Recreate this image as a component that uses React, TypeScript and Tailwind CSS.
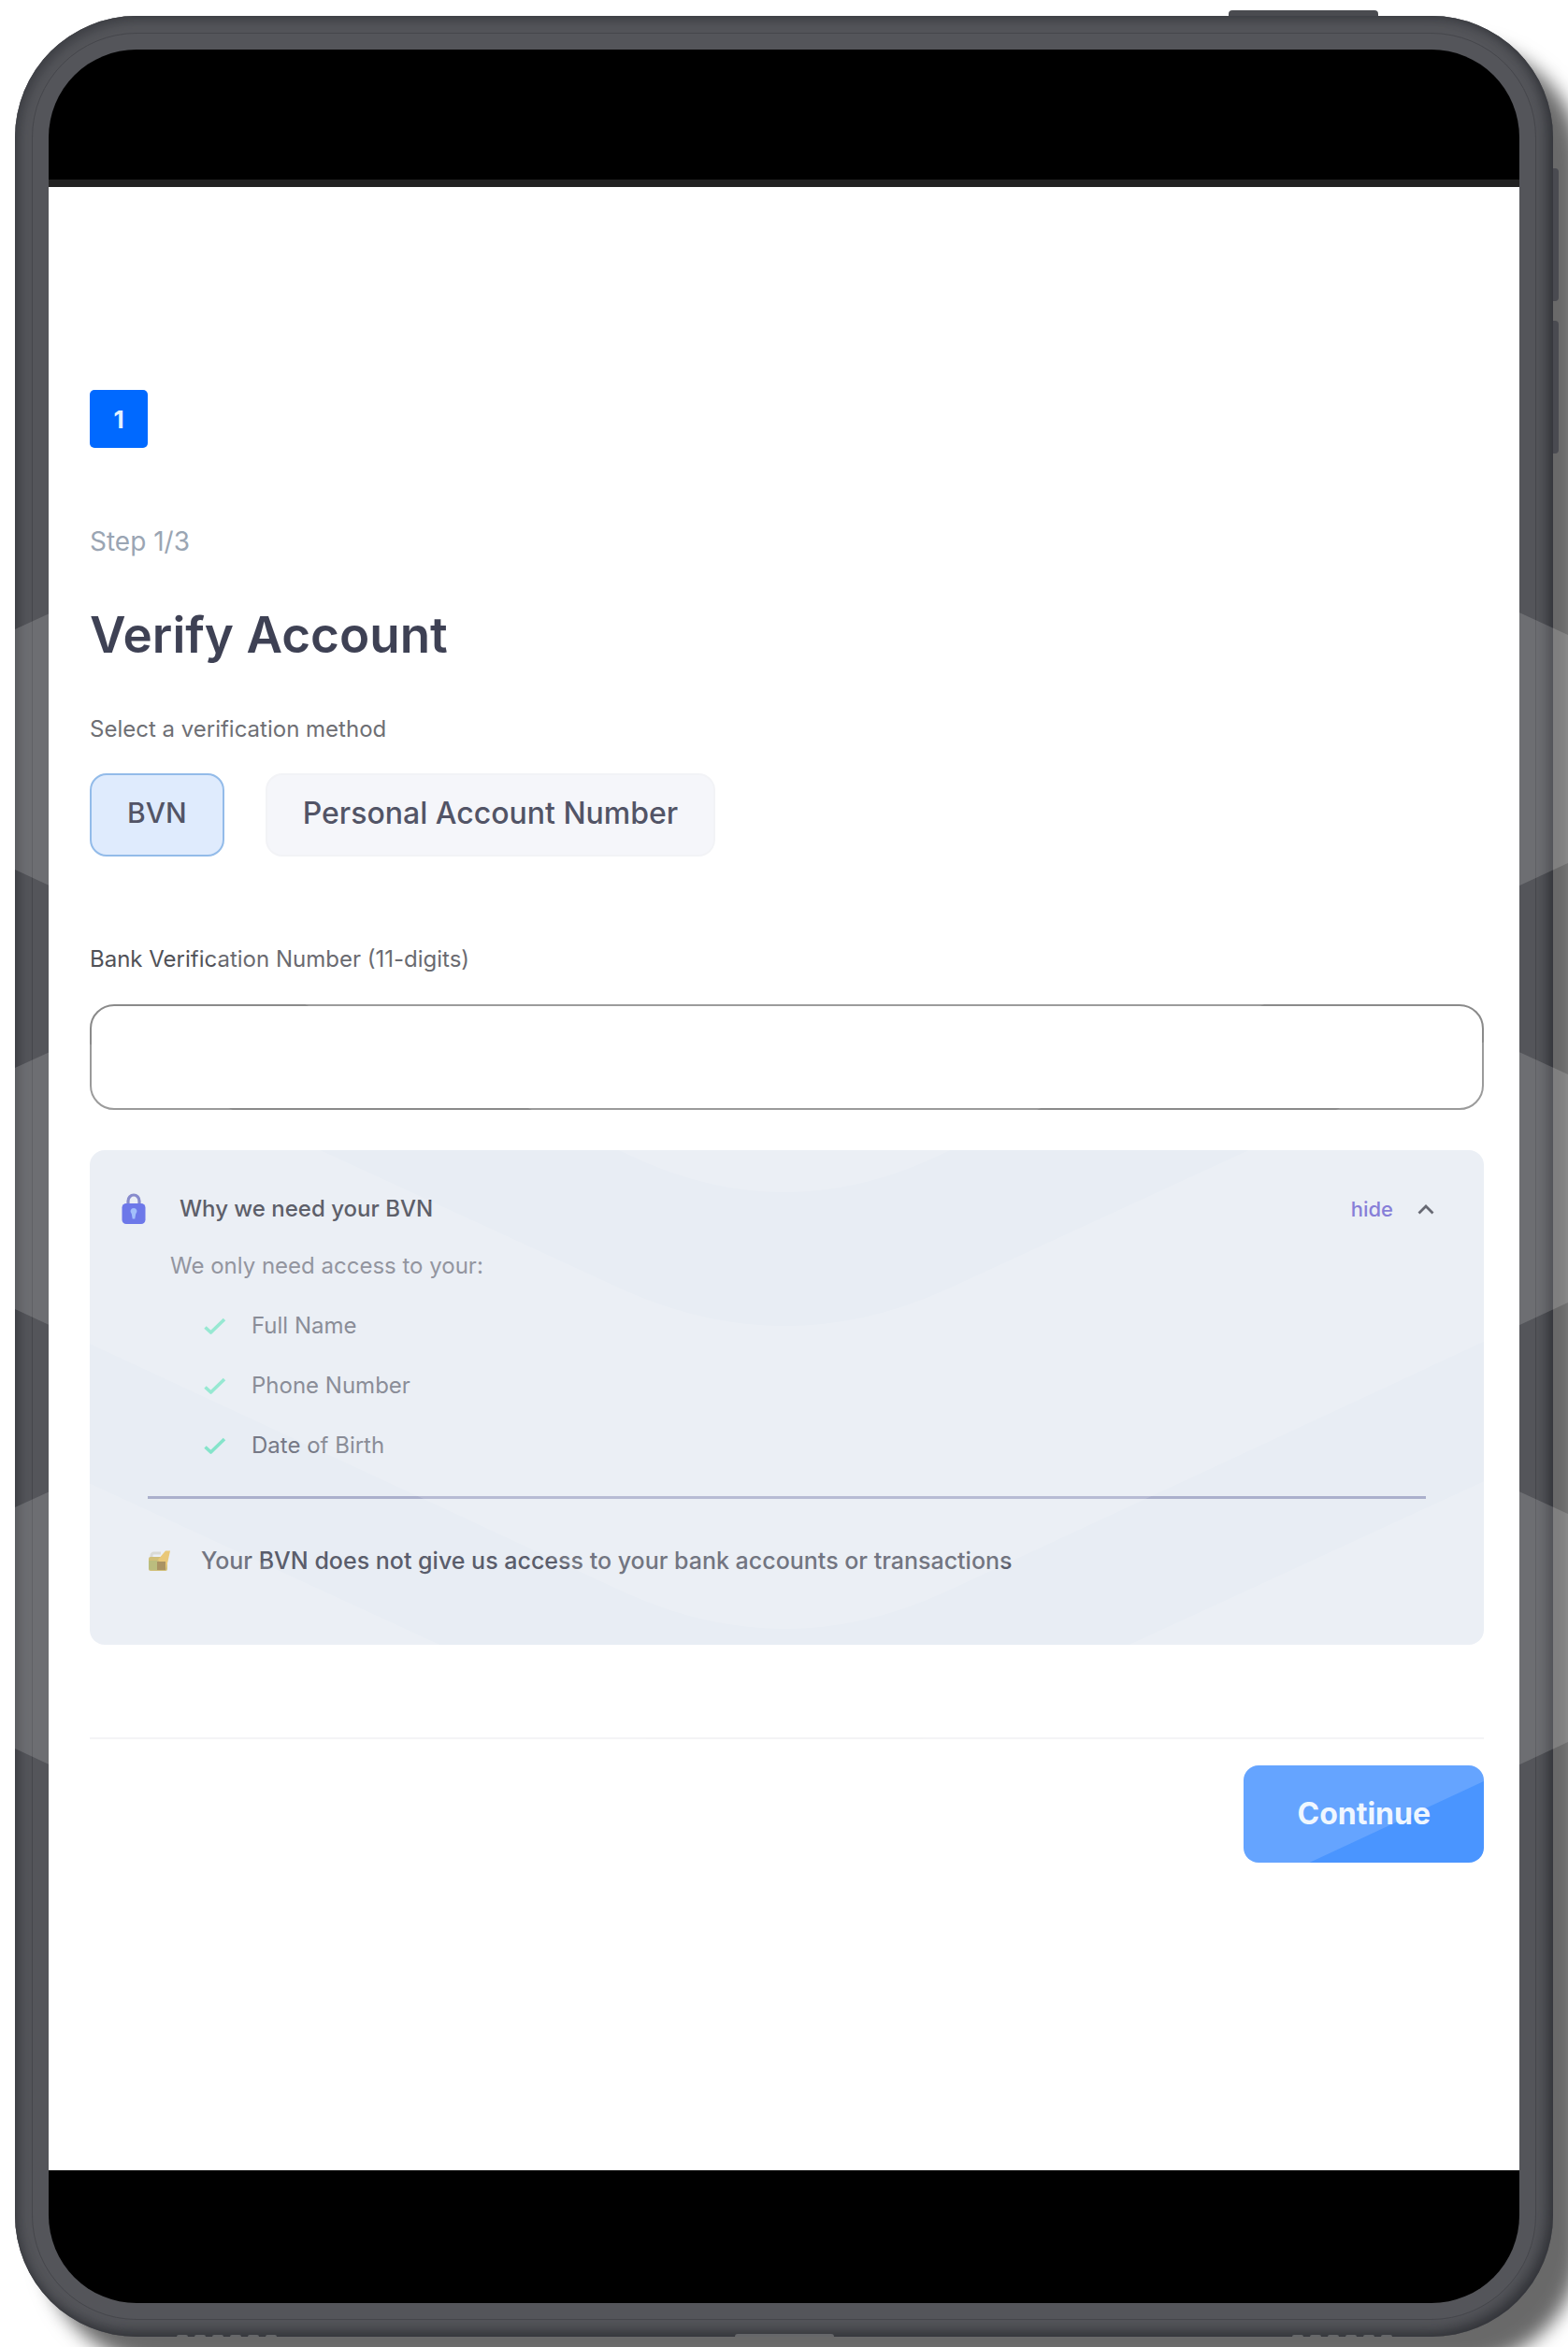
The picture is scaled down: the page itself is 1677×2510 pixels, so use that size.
import { useState } from "react";
import type { ReactNode } from "react";

const reasons = ["Full Name", "Phone Number", "Date of Birth"];
const methods = ["BVN", "Personal Account Number"];

function LockIcon() {
  return (
    <svg viewBox="0 0 26 34" className="h-[34px] w-[26px]" aria-hidden="true">
      <path d="M7 13V8.5a6 6.5 0 0 1 12 0V13" fill="none" stroke="#7377c4" strokeWidth="3.2" />
      <rect x="0.5" y="11" width="25" height="22" rx="4.5" fill="#5461e6" />
      <path d="M13 16a3.500 3.500 0 0 1 2.200 6.200L14.300 27.500h-2.600l-.9-5.300A3.500 3.500 0 0 1 13 16z" fill="#93b4fb" />
    </svg>
  );
}

function CheckIcon() {
  return (
    <svg viewBox="0 0 26 20" className="h-5 w-[26px] shrink-0" aria-hidden="true">
      <path d="M2.500 11.500 8.500 17 23 3" fill="none" stroke="#85e4ca" strokeWidth="3.600" strokeLinejoin="round" />
    </svg>
  );
}

function KeyLockIcon() {
  return (
    <svg viewBox="0 0 26 26" className="h-[26px] w-[26px] shrink-0" aria-hidden="true">
      <path d="M5 12V7.500a2.500 2.500 0 0 1 2.500-2.500H15" fill="none" stroke="#d3d4cf" strokeWidth="3" />
      <rect x="2" y="9" width="20" height="15" rx="2" fill="#c9b461" />
      <path d="M2 13h9v10H4a2 2 0 0 1-2-2z" fill="#b0b268" />
      <path d="M12 12 20 2.500h5L22.500 14 20 22" fill="#e6bf62" />
      <path d="M11 14h9v9h-9z" fill="#9c8048" />
    </svg>
  );
}

function ChevronUp() {
  return (
    <svg viewBox="0 0 18 12" className="h-3 w-[18px]" aria-hidden="true">
      <path d="M1.500 10.500 9 3l7.500 7.500" fill="none" stroke="#4d4f5b" strokeWidth="2.800" />
    </svg>
  );
}

/* Stacked-layers watermark laid over the whole device. */
function Watermark() {
  return (
    <svg
      viewBox="0 0 1677 2510"
      preserveAspectRatio="none"
      className="pointer-events-none absolute inset-0 h-full w-full"
      aria-hidden="true"
    >
      <g fill="#ffffff" fillOpacity="0.15">
        <path d="M16 673 760 331Q839 295 918 331L1677 679V923L1010 1233Q839 1317 668 1233L16 930Z" />
        <path d="M16 1142 84 1111 668 1380Q839 1456 1010 1380L1594 1111 1677 1149V1393L1010 1703Q839 1781 668 1703L16 1400Z" />
        <path d="M16 1612 84 1581 668 1850Q839 1926 1010 1850L1594 1581 1677 1619V1863L1010 2174Q839 2251 668 2174L16 1870Z" />
      </g>
    </svg>
  );
}

function PortHoles({ className }: { className: string }) {
  return (
    <div className={`absolute bottom-0 flex gap-[7px] ${className}`}>
      {[0, 1, 2, 3, 4, 5].map((i) => (
        <span key={i} className="h-[2px] w-3 rounded-t-full bg-[#66676a]" />
      ))}
    </div>
  );
}

function Device({ children }: { children: ReactNode }) {
  return (
    <div className="relative flex min-h-screen overflow-hidden bg-white pt-[17px] pr-4 pb-[11px] pl-4">
      <div className="relative flex flex-1 rounded-[130px] bg-[#54555a] p-[18px] shadow-[30px_30px_20px_rgba(0,0,0,0.590)]">
        <span className="absolute -top-[6px] right-[187px] h-2 w-40 rounded-t-[4px] bg-[#4a4b50]" />
        <span className="absolute top-[163px] -right-[6px] h-[142px] w-2 rounded-r-[4px] bg-[#4a4b51]" />
        <span className="absolute top-[326px] -right-[6px] h-[142px] w-2 rounded-r-[4px] bg-[#4a4b51]" />
        <div className="absolute inset-0 rounded-[130px] bg-[#54555a] shadow-[inset_5px_5px_12px_rgba(30,31,36,0.350),inset_-6px_-6px_14px_rgba(30,31,36,0.600)]" />
        <div className="relative flex flex-1 rounded-[112px] border border-[#45464b] bg-[#54555a] p-[17px]">
          <div className="flex flex-1 flex-col overflow-hidden rounded-[94px] bg-black">{children}</div>
        </div>
        <PortHoles className="left-[173px]" />
        <span className="absolute bottom-0 left-1/2 h-[3px] w-[106px] -translate-x-1/2 rounded-t-full bg-[#66676a]" />
        <PortHoles className="right-[172px]" />
      </div>
      <Watermark />
    </div>
  );
}

export default function App() {
  const [method, setMethod] = useState("BVN");
  const [open, setOpen] = useState(true);
  const [bvn, setBvn] = useState("");

  return (
    <Device>
      <div className="h-[139px] shrink-0" />
      <div className="h-2 shrink-0 bg-[#222222]" />
      <main className="flex flex-1 flex-col bg-white pt-[217px] pr-[38px] pl-11 font-['Inter',sans-serif]">
        <div className="flex h-[62px] w-[62px] items-center justify-center rounded-[5px] bg-[#0069ff] text-[26px] font-bold text-[#e3f1ff]">
          1
        </div>
        <p className="mt-20 text-[28px] leading-10 text-[#9aa5b3]">Step 1/3</p>
        <h1 className="mt-12 text-[53px] leading-[64px] font-semibold text-[#1d2037]">Verify Account</h1>

        <p className="mt-[53px] text-2xl leading-8 text-[#55565c]">Select a verification method</p>
        <div className="mt-[31px] flex gap-11">
          {methods.map((m) => (
            <button
              key={m}
              type="button"
              aria-pressed={m === method}
              onClick={() => setMethod(m)}
              className={
                m === method
                  ? "h-[89px] rounded-[18px] border-2 border-[#80b0e6] bg-[#dae8fd] px-[38px] pb-1 text-[30px] font-medium text-[#34374c]"
                  : "h-[89px] rounded-[18px] border-2 border-[#f0f1f5] bg-[#f4f5fa] px-[38px] pb-1 text-[32px] font-medium text-[#34374c]"
              }
            >
              {m}
            </button>
          ))}
        </div>

        <label htmlFor="bvn" className="mt-[94px] self-start text-2xl leading-8 text-[#505157]">
          Bank Verification Number (11-digits)
        </label>
        <input
          id="bvn"
          inputMode="numeric"
          maxLength={11}
          value={bvn}
          onChange={(e) => setBvn(e.target.value)}
          className="mt-8 h-[113px] rounded-[26px] border-2 border-[#8a8a8a] bg-white px-8 text-[32px] text-[#1d2037] outline-none"
        />

        <section className="mt-[43px] rounded-2xl bg-[#e8edf4] px-[34px] pt-[46px] pb-[74px]">
          <div className="flex items-center">
            <LockIcon />
            <h2 className="ml-9 text-2xl leading-8 font-medium text-[#41434f]">Why we need your BVN</h2>
            <button
              type="button"
              aria-expanded={open}
              onClick={() => setOpen(!open)}
              className="mr-[19px] ml-auto flex items-center gap-[26px] text-[22px] leading-8 font-medium text-[#7369d2]"
            >
              {open ? "hide" : "show"}
              <ChevronUp />
            </button>
          </div>
          {open && (
            <>
              <p className="mt-[28px] ml-[52px] text-2xl leading-8 text-[#80838f]">We only need access to your:</p>
              <ul className="mt-8 ml-[87px] flex flex-col gap-8">
                {reasons.map((r) => (
                  <li key={r} className="flex items-center gap-[26px] text-2xl leading-8 text-[#767986]">
                    <CheckIcon />
                    {r}
                  </li>
                ))}
              </ul>
              <hr className="mt-[38px] mr-7 ml-7 border-t-[3px] border-[#abb0cc]" />
              <div className="mt-[50px] ml-[27px] flex items-center gap-8">
                <KeyLockIcon />
                <p className="text-[25px] leading-8 font-medium text-[#5a5d6b]">
                  Your BVN does not give us access to your bank accounts or transactions
                </p>
              </div>
            </>
          )}
        </section>

        <hr className="mt-[99px] border-t-2 border-[#f3f3f5]" />
        <button
          type="button"
          className="mt-7 h-[104px] self-end rounded-2xl bg-[#4a95ff] px-[57px] text-[32px] font-bold text-[#eef6ff]"
        >
          Continue
        </button>
      </main>
      <div className="h-[142px] shrink-0" />
    </Device>
  );
}
